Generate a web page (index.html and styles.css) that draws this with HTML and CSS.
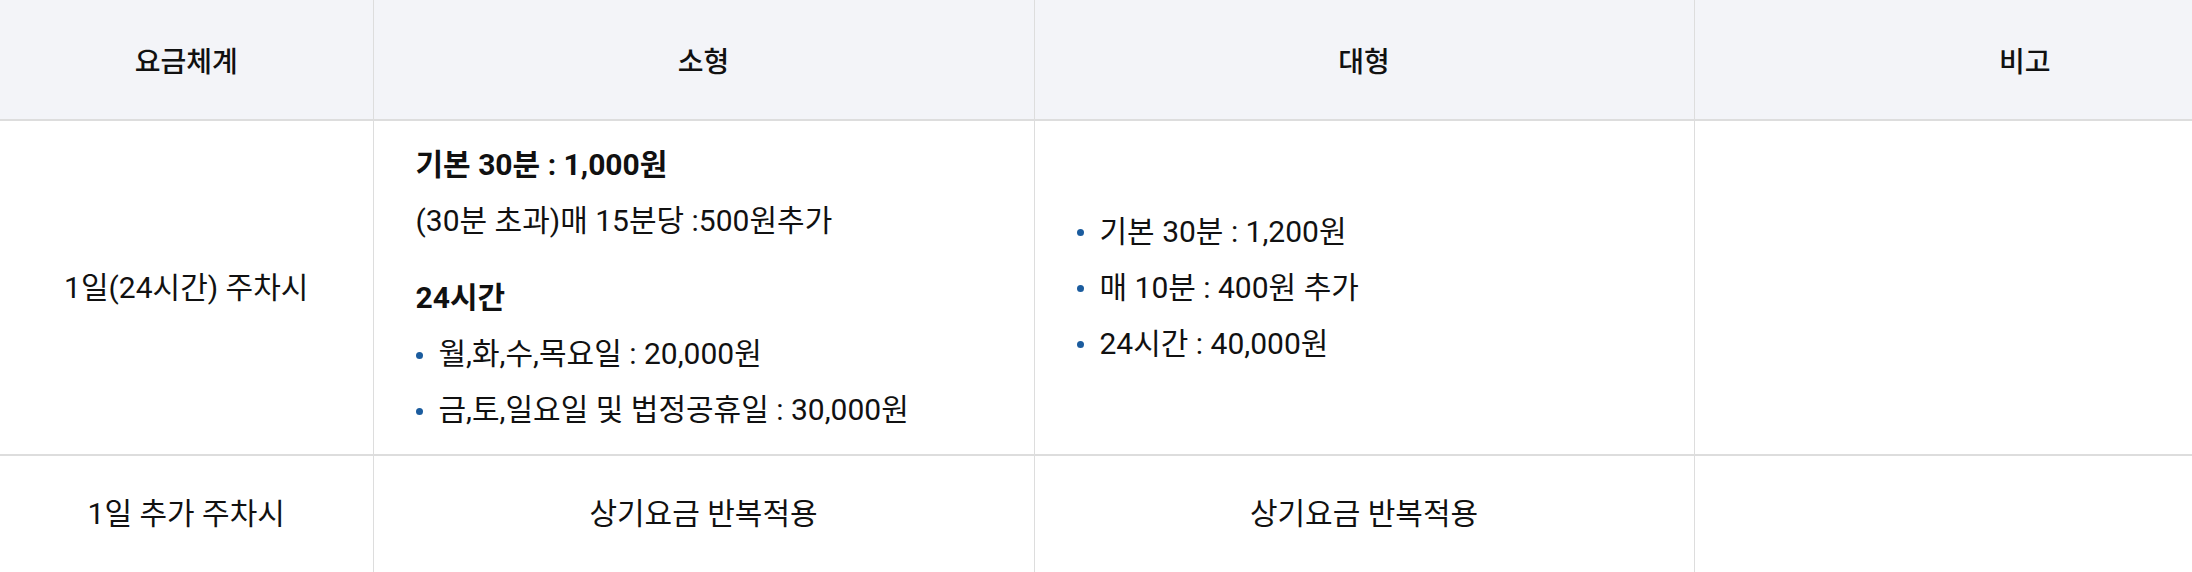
FILE: index.html
```html
<!DOCTYPE html>
<html lang="ko">
<head>
<meta charset="utf-8">
<title>주차요금</title>
<link rel="stylesheet" href="styles.css">
</head>
<body>
<div class="wrap">
  <table class="fee">
    <colgroup>
      <col class="c1"><col class="c2"><col class="c3"><col class="c4">
    </colgroup>
    <thead>
      <tr><th>요금체계</th><th>소형</th><th>대형</th><th>비고</th></tr>
    </thead>
    <tbody>
      <tr class="r1">
        <td>1일(24시간) 주차시</td>
        <td class="left">
          <p class="strong">기본 30분 : 1,000원</p>
          <p>(30분 초과)매 15분당 :500원추가</p>
          <p class="strong gap">24시간</p>
          <ul class="dots">
            <li>월,화,수,목요일 : 20,000원</li>
            <li>금,토,일요일 및 법정공휴일 : 30,000원</li>
          </ul>
        </td>
        <td class="left">
          <ul class="dots">
            <li>기본 30분 : 1,200원</li>
            <li>매 10분 : 400원 추가</li>
            <li>24시간 : 40,000원</li>
          </ul>
        </td>
        <td></td>
      </tr>
      <tr class="r2">
        <td>1일 추가 주차시</td>
        <td>상기요금 반복적용</td>
        <td>상기요금 반복적용</td>
        <td></td>
      </tr>
    </tbody>
  </table>
</div>
</body>
</html>
```
FILE: styles.css
```css
html, body {
  margin: 0;
  padding: 0;
  background: #ffffff;
}
body {
  font-family: Roboto, "Noto Sans CJK KR", sans-serif;
  color: #111111;
}
.wrap {
  width: 2192px;
  overflow: hidden;
}
.fee {
  width: 2355px;
  border-collapse: collapse;
  table-layout: fixed;
}
.c1 { width: 373px; }
.c2 { width: 661px; }
.c3 { width: 660px; }
.c4 { width: 661px; }

.fee th {
  height: 119px;
  padding: 0;
  background: #f3f4f8;
  font-size: 28px;
  font-weight: 500;
  color: #111111;
  text-align: center;
  vertical-align: middle;
  border-left: 1px solid #dddddd;
  border-bottom: 2px solid #dddddd;
}
.fee td {
  padding: 16px 42px;
  font-size: 30px;
  line-height: 56px;
  text-align: center;
  vertical-align: middle;
  border-left: 1px solid #dddddd;
  border-bottom: 2px solid #dddddd;
}
.fee th:first-child,
.fee td:first-child {
  border-left: none;
}
.fee td.left {
  text-align: left;
}
.r2 td {
  height: 84px;
  border-bottom: none;
}
.fee p {
  margin: 0;
}
.fee .strong {
  font-weight: 700;
}
.fee .gap {
  margin-top: 21px;
}
.dots {
  list-style: none;
  margin: 0;
  padding: 0;
}
.dots li {
  display: flex;
  align-items: center;
  gap: 16px;
}
.dots li::before {
  content: "";
  flex: none;
  width: 7px;
  height: 7px;
  margin-top: 2px;
  border-radius: 50%;
  background: #1b5c9e;
}
```
